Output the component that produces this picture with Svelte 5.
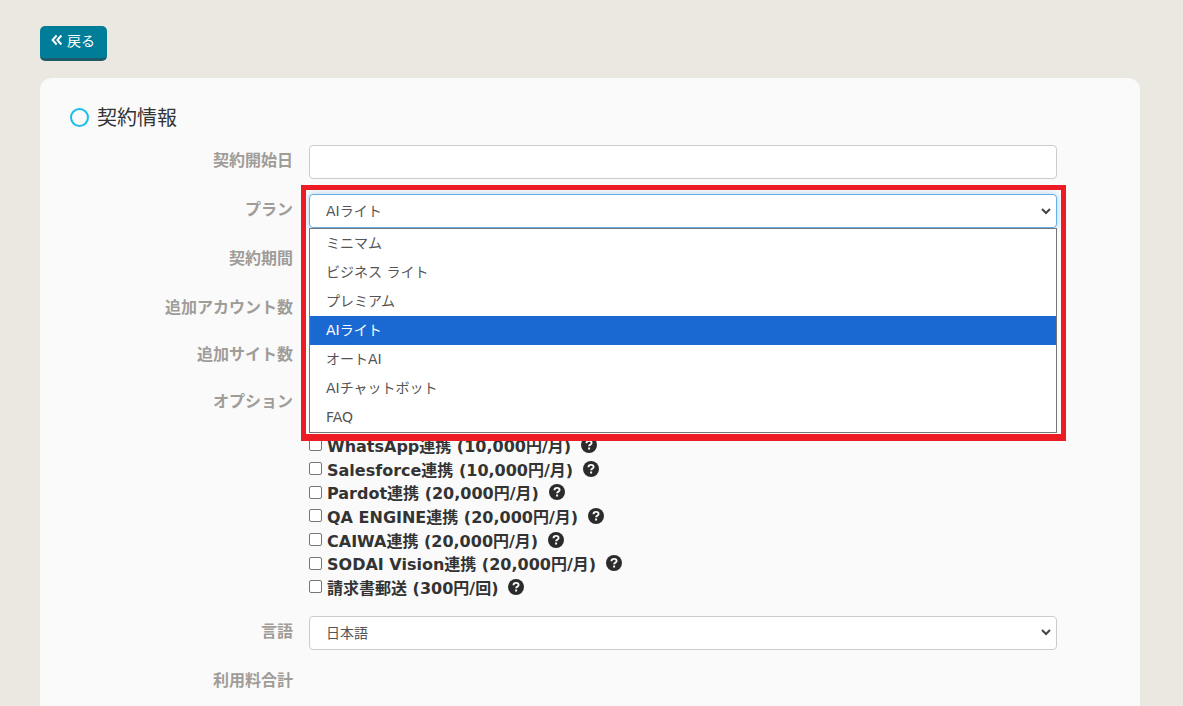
<script>
    const plans = ["ミニマム", "ビジネス ライト", "プレミアム", "AIライト", "オートAI", "AIチャットボット", "FAQ"];
    const selected = "AIライト";

    const options = [
        { name: "WhatsApp連携 (10,000円/月)" },
        { name: "Salesforce連携 (10,000円/月)" },
        { name: "Pardot連携 (20,000円/月)" },
        { name: "QA ENGINE連携 (20,000円/月)" },
        { name: "CAIWA連携 (20,000円/月)" },
        { name: "SODAI Vision連携 (20,000円/月)" },
        { name: "請求書郵送 (300円/回)" },
    ];
</script>

<div class="page">
    <button class="back" type="button">
        <svg width="12" height="12" viewBox="0 0 12 12" fill="none" stroke="currentColor" stroke-width="2">
            <path d="M5.600 1.500 1.600 6l4 4.500M10.400 1.500 6.400 6l4 4.500" />
        </svg>
        戻る
    </button>

    <section class="card">
        <h2><span class="ring"></span><span class="title">契約情報</span></h2>

        <div class="form">
            <div class="row">
                <span class="label">契約開始日</span>
                <input class="control" type="text" />
            </div>

            <div class="row">
                <span class="label">プラン</span>
                <div class="plan">
                    <select class="control focused">
                        {#each plans as p}
                            <option selected={p === selected}>{p}</option>
                        {/each}
                    </select>
                    <div class="highlight"></div>
                    <ul class="dropdown">
                        {#each plans as p}
                            <li class:active={p === selected}>{p}</li>
                        {/each}
                    </ul>
                </div>
            </div>

            <div class="row"><span class="label">契約期間</span><div class="control blank"></div></div>
            <div class="row short"><span class="label">追加アカウント数</span><div class="control blank"></div></div>
            <div class="row after"><span class="label">追加サイト数</span><div class="control blank"></div></div>

            <div class="row top">
                <span class="label">オプション</span>
                <div class="checks">
                    {#each options as o}
                        <label class="check">
                            <input type="checkbox" />
                            <span>{o.name}</span>
                            <svg class="help" width="16" height="16" viewBox="0 0 16 16">
                                <circle cx="8" cy="8" r="8" fill="#2b2b2b" />
                                <path d="M5.500 6.200c0-1.500 1.100-2.300 2.600-2.300s2.500.8 2.500 2c0 1.800-2.500 1.700-2.500 3.400" fill="none" stroke="#fafafa" stroke-width="1.900" />
                                <rect x="7.100" y="10.500" width="2" height="2" fill="#fafafa" />
                            </svg>
                        </label>
                    {/each}
                </div>
            </div>

            <div class="row lang">
                <span class="label">言語</span>
                <select class="control">
                    <option>日本語</option>
                </select>
            </div>

            <div class="row">
                <span class="label">利用料合計</span>
            </div>
        </div>
    </section>
</div>

<style>
    :global(body) {
        margin: 0;
        background: #ebe8e1;
        overflow: hidden;
    }

    .page {
        height: 706px;
        box-sizing: border-box;
        padding: 26px 43px 0 40px;
        overflow: hidden;
        font-family: "Noto Sans CJK JP", "Noto Sans", sans-serif;
    }

    .back {
        display: flex;
        align-items: center;
        gap: 4px;
        width: 67px;
        height: 35px;
        padding: 0 0 4px 11px;
        box-sizing: border-box;
        background: #007d99;
        border: 0;
        border-bottom: 3px solid #1c5a68;
        border-radius: 5px;
        color: #fff;
        font: inherit;
        font-size: 14px;
    }

    .card {
        margin-top: 17px;
        padding: 24px 83px 60px 30px;
        background: #fafafa;
        border-radius: 12px;
    }

    h2 {
        display: flex;
        align-items: center;
        gap: 8px;
        height: 30px;
        margin: 0 0 13px;
        font-size: 20px;
        font-weight: 400;
        color: #333;
    }

    .title {
        margin-bottom: 2px;
    }

    .ring {
        width: 19px;
        height: 19px;
        box-sizing: border-box;
        border: 2.500px solid #18bfea;
        border-radius: 50%;
    }

    .row {
        display: flex;
        align-items: center;
        gap: 16px;
        min-height: 34px;
        margin-bottom: 15px;
    }

    .row.short {
        margin-bottom: 13px;
    }

    .row.after {
        margin-bottom: 16px;
    }

    .row.top {
        align-items: flex-start;
        margin-bottom: 17px;
    }

    .row.lang {
        margin-bottom: 15px;
    }

    .label {
        width: 223px;
        flex: none;
        padding-bottom: 6px;
        text-align: right;
        font-size: 16px;
        font-weight: 700;
        color: #a09c98;
        line-height: 20px;
    }

    .row.top .label {
        margin-top: 1px;
    }

    .control {
        flex: 1;
        width: 100%;
        height: 34px;
        box-sizing: border-box;
        padding: 0 16px;
        background: #fff;
        border: 1px solid #cccccc;
        border-radius: 4px;
        font-family: "DejaVu Sans", "Noto Sans CJK JP", sans-serif;
        font-size: 14px;
        color: #555;
        outline: none;
    }

    select.control {
        appearance: none;
        background: #fff url("data:image/svg+xml,%3Csvg xmlns='http://www.w3.org/2000/svg' width='10' height='7' viewBox='0 0 10 7'%3E%3Cpath d='M1 1l4 4 4-4' fill='none' stroke='%23444' stroke-width='2'/%3E%3C/svg%3E") no-repeat right 5px center;
    }

    .control.focused {
        border-color: #66afe9;
        box-shadow: 0 0 6px rgba(102, 175, 233, 0.5);
    }

    .plan {
        position: relative;
        flex: 1;
        height: 34px;
    }

    .highlight {
        position: absolute;
        left: -8px;
        top: -9px;
        width: 765px;
        height: 256px;
        box-sizing: border-box;
        border: 5px solid #ed1c24;
        border-bottom-width: 7px;
        pointer-events: none;
    }

    .dropdown {
        position: absolute;
        left: 0;
        right: 0;
        top: 34px;
        z-index: 2;
        margin: 0;
        padding: 0;
        list-style: none;
        background: #fff;
        border: 1px solid #767676;
        font-family: "DejaVu Sans", "Noto Sans CJK JP", sans-serif;
        font-size: 14px;
        color: #555;
    }

    .dropdown li {
        height: 29px;
        padding: 0 16px;
        line-height: 28px;
    }

    .dropdown li.active {
        background: #1a69d3;
        color: #fff;
    }

    .checks {
        display: flex;
        flex-direction: column;
        padding-top: 44px;
    }

    .check {
        display: flex;
        align-items: center;
        height: 23.700px;
        font-family: "DejaVu Sans", "Noto Sans CJK JP", sans-serif;
        font-size: 16px;
        font-weight: 700;
        color: #333;
    }

    .check input {
        width: 13px;
        height: 13px;
        margin: 0 5px 0 0;
        appearance: none;
        background: #fff;
        border: 1px solid #767676;
        border-radius: 2px;
    }

    .help {
        margin-left: 10px;
    }
</style>
